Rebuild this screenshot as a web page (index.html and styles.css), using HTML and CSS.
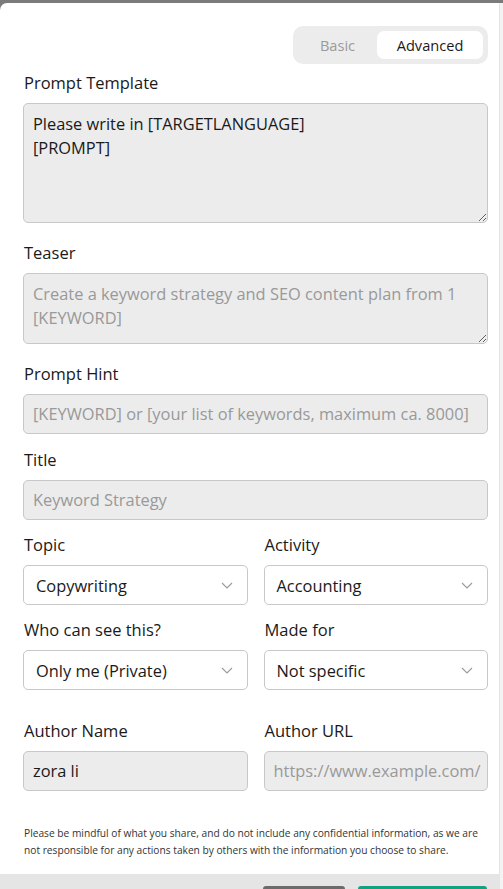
FILE: index.html
```html
<!DOCTYPE html>
<html>
<head>
<meta charset="utf-8">
<link rel="stylesheet" href="styles.css">
</head>
<body>
<div class="screen">
  <div class="modal">
    <div class="body">
      <div class="toggle-row">
        <div class="toggle">
          <span class="tab">Basic</span>
          <span class="tab active">Advanced</span>
        </div>
      </div>

      <div class="field area-field">
        <div class="label">Prompt Template</div>
        <textarea class="box area tall" readonly>Please write in [TARGETLANGUAGE]
[PROMPT]</textarea>
      </div>

      <div class="field area-field">
        <div class="label">Teaser</div>
        <textarea class="box area short muted" readonly>Create a keyword strategy and SEO content plan from 1 [KEYWORD]</textarea>
      </div>

      <div class="field hint-field">
        <div class="label">Prompt Hint</div>
        <div class="box input muted">[KEYWORD] or [your list of keywords, maximum ca. 8000]</div>
      </div>

      <div class="field">
        <div class="label">Title</div>
        <div class="box input muted">Keyword Strategy</div>
      </div>

      <div class="grid">
        <div class="field">
          <div class="label">Topic</div>
          <div class="select"><span>Copywriting</span><svg class="chev" viewBox="0 0 12 7" width="12" height="7"><path d="M1 1l5 5 5-5" fill="none" stroke="#999" stroke-width="1.1"/></svg></div>
        </div>
        <div class="field">
          <div class="label">Activity</div>
          <div class="select"><span>Accounting</span><svg class="chev" viewBox="0 0 12 7" width="12" height="7"><path d="M1 1l5 5 5-5" fill="none" stroke="#999" stroke-width="1.1"/></svg></div>
        </div>
        <div class="field">
          <div class="label">Who can see this?</div>
          <div class="select"><span>Only me (Private)</span><svg class="chev" viewBox="0 0 12 7" width="12" height="7"><path d="M1 1l5 5 5-5" fill="none" stroke="#999" stroke-width="1.1"/></svg></div>
        </div>
        <div class="field">
          <div class="label">Made for</div>
          <div class="select"><span>Not specific</span><svg class="chev" viewBox="0 0 12 7" width="12" height="7"><path d="M1 1l5 5 5-5" fill="none" stroke="#999" stroke-width="1.1"/></svg></div>
        </div>
      </div>

      <div class="grid author">
        <div class="field">
          <div class="label">Author Name</div>
          <div class="box input">zora li</div>
        </div>
        <div class="field">
          <div class="label">Author URL</div>
          <div class="box input muted">https://www.example.com/</div>
        </div>
      </div>

      <p class="note">Please be mindful of what you share, and do not include any confidential information, as we are not responsible for any actions taken by others with the information you choose to share.</p>
    </div>
    <div class="footer">
      <span class="btn cancel"></span>
      <span class="btn save"></span>
    </div>
  </div>
  <div class="scroll"></div>
</div>
</body>
</html>
```

FILE: styles.css
```css
* { box-sizing: border-box; }
html, body { margin: 0; padding: 0; }
body {
  background: #7b7b7b;
  font-family: "Open Sans", "Noto Sans", sans-serif;
  color: #1a1a1a;
  height: 889px;
  overflow: hidden;
}
.screen {
  display: flex;
  height: 889px;
  padding-top: 3px;
}
.modal {
  width: 499px;
  background: #fff;
  border-radius: 7px 0 0 0;
  display: flex;
  flex-direction: column;
  overflow: hidden;
}
.scroll {
  width: 4px;
  background: #f3f3f3;
  border-left: 1px solid #e4e4e4;
}
.body {
  padding: 23px 11px 0 23px;
  flex: 1;
}
.toggle-row {
  display: flex;
  justify-content: flex-end;
}
.toggle {
  display: flex;
  background: #ececec;
  border-radius: 10px;
  padding: 5px;
  height: 38px;
  width: 195px;
}
.tab {
  font-size: 14.6px;
  color: #9a9a9a;
  display: flex;
  align-items: center;
  justify-content: center;
  width: 79px;
}
.tab.active {
  width: 106px;
  background: #fff;
  color: #1a1a1a;
  border-radius: 7px;
}
.field { margin-bottom: 13px; }
.area-field { margin-bottom: 18px; }
.hint-field { margin-bottom: 14px; }
.label {
  font-size: 16.5px;
  line-height: 24px;
  margin: 0 0 8px 1px;
  color: #1a1a1a;
}
.toggle-row + .field .label { margin-top: 7px; }
.box {
  display: block;
  width: 100%;
  background: #ececec;
  border: 1px solid #c8c8c8;
  border-radius: 5px;
  font-family: inherit;
  font-size: 16.4px;
  color: #1a1a1a;
}
.area {
  line-height: 24px;
  padding: 8px 9px;
  resize: vertical;
  margin: 0;
  outline: none;
}
.tall { height: 120px; }
.short { height: 71px; }
.input {
  height: 40px;
  line-height: 38px;
  padding: 0 9px;
  white-space: nowrap;
  overflow: hidden;
}
.muted { color: #999; }
.grid {
  display: grid;
  grid-template-columns: minmax(0, 1fr) minmax(0, 1fr);
  column-gap: 16px;
}
.author { margin-top: 16px; }
.select {
  height: 40px;
  border: 1px solid #c8c8c8;
  border-radius: 5px;
  display: flex;
  align-items: center;
  justify-content: space-between;
  padding: 0 14px 0 12px;
  font-size: 16.4px;
  color: #1a1a1a;
}
.chev { display: block; }
.note {
  font-size: 10.2px;
  line-height: 17px;
  color: #333;
  margin: 21px 0 0 1px;
}
.footer {
  height: 15px;
  background: #e5e5e5;
  display: flex;
  justify-content: flex-end;
  align-items: flex-end;
  gap: 13px;
  padding-right: 12px;
}
.btn {
  height: 3px;
  border-radius: 5px 5px 0 0;
}
.cancel { width: 82px; background: #6b6b6b; }
.save { width: 129px; background: #10a37f; }
```
